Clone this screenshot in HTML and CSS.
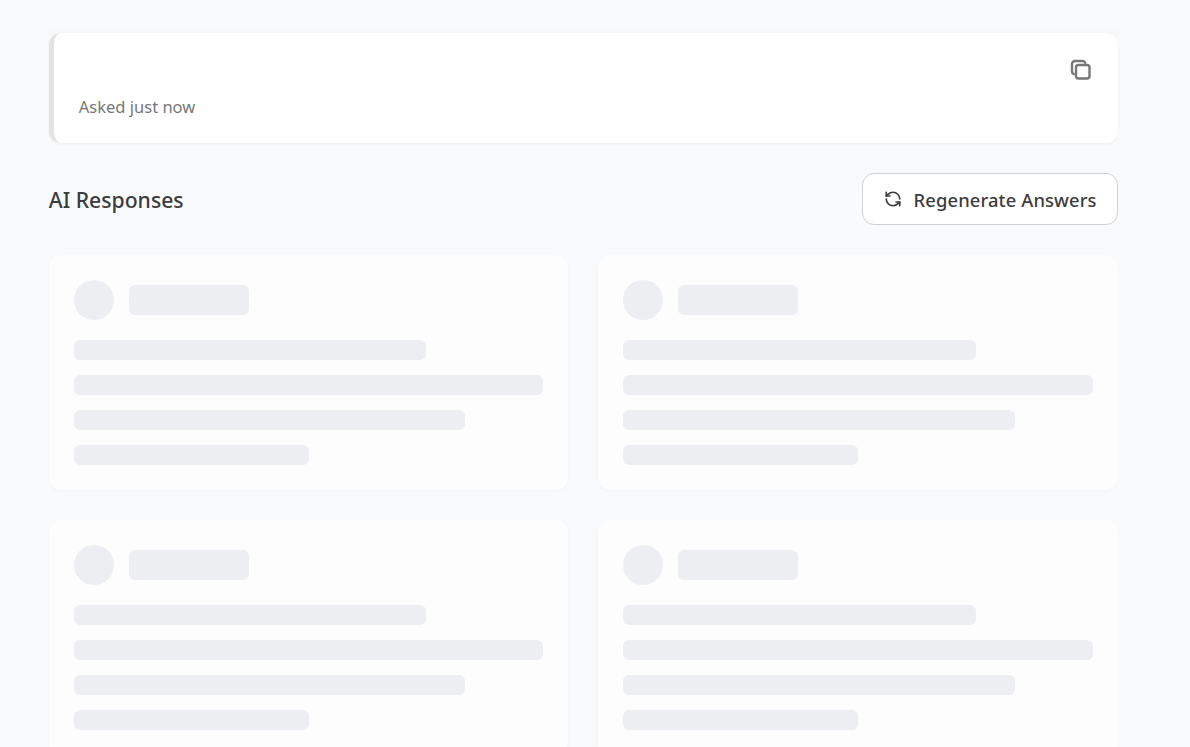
FILE: index.html
```html
<!DOCTYPE html>
<html lang="en">
<head>
<meta charset="utf-8">
<title>AI Responses</title>
<link rel="stylesheet" href="styles.css">
</head>
<body>
<main class="page">
  <div class="prev-edge"></div>
  <section class="question">
    <div class="question-main">
      <p class="asked">Asked just now</p>
    </div>
    <button class="copy" aria-label="Copy">
      <svg viewBox="0 0 24 24" width="24" height="24" fill="none" stroke="currentColor" stroke-width="2.4" stroke-linecap="round" stroke-linejoin="round">
        <rect x="7" y="7" width="13.500" height="13.500" rx="2.500"/>
        <path d="M4.800 16.200C3.700 15.800 3 14.800 3 13.600V6a3 3 0 0 1 3-3h7.600c1.200 0 2.200.7 2.600 1.800"/>
      </svg>
    </button>
  </section>
  <header class="head">
    <h2 class="title">AI Responses</h2>
    <button class="regen">
      <svg viewBox="0 0 24 24" width="18" height="18" fill="none" stroke="currentColor" stroke-width="2.200" stroke-linecap="round" stroke-linejoin="round">
        <path d="M21 12a9 9 0 0 0-9-9 9.750 9.750 0 0 0-6.740 2.740L3 8"/>
        <path d="M3 3v5h5"/>
        <path d="M3 12a9 9 0 0 0 9 9 9.750 9.750 0 0 0 6.740-2.740L21 16"/>
        <path d="M16 16h5v5"/>
      </svg>
      <span>Regenerate Answers</span>
    </button>
  </header>
  <section class="grid">
    <article class="card"><div class="card-top"><div class="avatar"></div><div class="name"></div></div><div class="line w75"></div><div class="line w100"></div><div class="line w83"></div><div class="line w50"></div></article>
    <article class="card"><div class="card-top"><div class="avatar"></div><div class="name"></div></div><div class="line w75"></div><div class="line w100"></div><div class="line w83"></div><div class="line w50"></div></article>
    <article class="card"><div class="card-top"><div class="avatar"></div><div class="name"></div></div><div class="line w75"></div><div class="line w100"></div><div class="line w83"></div><div class="line w50"></div></article>
    <article class="card"><div class="card-top"><div class="avatar"></div><div class="name"></div></div><div class="line w75"></div><div class="line w100"></div><div class="line w83"></div><div class="line w50"></div></article>
  </section>
</main>
</body>
</html>
```
FILE: styles.css
```css
* { box-sizing: border-box; }
html, body { margin: 0; height: 747px; overflow: hidden; background: #f9fafc; }
body { font-family: "Noto Sans", "Open Sans", sans-serif; color: #3c3c3c; }
.page { width: 1068.8px; margin-left: 48.8px; }
.prev-edge { height: 0; margin-bottom: 33px; box-shadow: 0 0 6px 2px rgba(0,0,0,.03); }
.question { height: 110px; background: #fff; border-left: 5px solid #e3e3e3; border-radius: 12px; box-shadow: 0 1px 3px rgba(0,0,0,.05); padding: 25px; display: flex; justify-content: space-between; align-items: flex-start; margin-bottom: 30px; }
.question-main { flex: 1; padding-top: 38px; }
.asked { margin: 0; font-size: 16.5px; line-height: 22px; color: #777; }
.copy { border: 0; background: none; padding: 0; width: 24px; height: 24px; color: #777; }
.copy svg { display: block; }
.head { height: 52px; display: flex; justify-content: space-between; align-items: center; margin-bottom: 30px; }
.title { margin: 1px 0 0; font-size: 21.2px; font-weight: 500; color: #3c3c3c; }
.regen { height: 52px; width: 256px; border: 1px solid #d0d0d8; border-radius: 12px; background: #fff; display: flex; align-items: center; justify-content: center; gap: 12px; font: 500 18.4px "Noto Sans", "Open Sans", sans-serif; letter-spacing: .1px; color: #3c3c3c; padding: 0 0 0 1px; }
.regen span { margin-top: 1px; }
.grid { display: grid; grid-template-columns: 1fr 1fr; gap: 30px; }
.card { height: 235px; background: #fdfdfd; border-radius: 12px; padding: 25px; box-shadow: 0 1px 3px rgba(0,0,0,.03); display: flex; flex-direction: column; gap: 15px; }
.card-top { display: flex; align-items: center; gap: 15px; margin-bottom: 5px; }
.avatar { width: 40px; height: 40px; border-radius: 50%; background: #edeef2; }
.name { width: 120px; height: 30px; border-radius: 6px; background: #edeef2; }
.line { height: 20px; border-radius: 6px; background: #edeef2; }
.w75 { width: 75.1%; }
.w100 { width: 100%; }
.w83 { width: 83.4%; }
.w50 { width: 50.05%; }
```
